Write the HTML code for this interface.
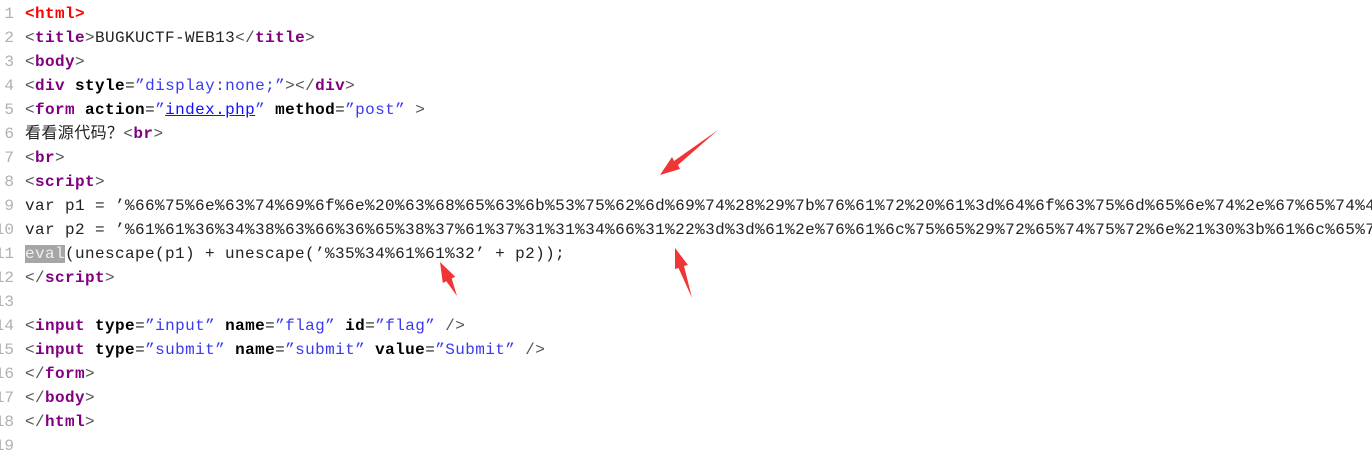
<!DOCTYPE html>
<html><head><meta charset="utf-8"><style>
body{margin:0;width:1372px;height:474px;background:#fff;overflow:hidden;position:relative;font-family:"Liberation Mono","Noto Sans CJK SC",monospace;font-size:16px;letter-spacing:0.4px}
.l{position:absolute;left:0;height:24px;line-height:24px;white-space:pre;width:2000px}
.n{position:absolute;left:-6px;width:20px;text-align:right;color:#b0b0b0;letter-spacing:0}
.c{position:absolute;left:25px;color:#222}
.t{color:#800080;font-weight:bold}
.h{color:#ff0000;font-weight:bold}
.b{color:#555}
.a{color:#000;font-weight:bold}
.v{color:#3a3af0}
.u{color:#1010ff;text-decoration:underline}
.e{background:#a6a6a6;color:#eee}
</style></head><body>
<div class="l" style="top:2px"><span class="n">1</span><span class="c"><span class="h">&lt;html&gt;</span></span></div>
<div class="l" style="top:26px"><span class="n">2</span><span class="c"><span class="b">&lt;</span><span class="t">title</span><span class="b">&gt;</span>BUGKUCTF-WEB13<span class="b">&lt;/</span><span class="t">title</span><span class="b">&gt;</span></span></div>
<div class="l" style="top:50px"><span class="n">3</span><span class="c"><span class="b">&lt;</span><span class="t">body</span><span class="b">&gt;</span></span></div>
<div class="l" style="top:74px"><span class="n">4</span><span class="c"><span class="b">&lt;</span><span class="t">div</span> <span class="a">style</span>=<span class="v">”display:none;”</span><span class="b">&gt;&lt;/</span><span class="t">div</span><span class="b">&gt;</span></span></div>
<div class="l" style="top:98px"><span class="n">5</span><span class="c"><span class="b">&lt;</span><span class="t">form</span> <span class="a">action</span>=<span class="v">”</span><span class="u">index.php</span><span class="v">”</span> <span class="a">method</span>=<span class="v">”post”</span> <span class="b">&gt;</span></span></div>
<div class="l" style="top:122px"><span class="n">6</span><span class="c">看看源代码？<span class="b">&lt;</span><span class="t">br</span><span class="b">&gt;</span></span></div>
<div class="l" style="top:146px"><span class="n">7</span><span class="c"><span class="b">&lt;</span><span class="t">br</span><span class="b">&gt;</span></span></div>
<div class="l" style="top:170px"><span class="n">8</span><span class="c"><span class="b">&lt;</span><span class="t">script</span><span class="b">&gt;</span></span></div>
<div class="l" style="top:194px"><span class="n">9</span><span class="c">var p1 = ’%66%75%6e%63%74%69%6f%6e%20%63%68%65%63%6b%53%75%62%6d%69%74%28%29%7b%76%61%72%20%61%3d%64%6f%63%75%6d%65%6e%74%2e%67%65%74%45%6c</span></div>
<div class="l" style="top:218px"><span class="n">10</span><span class="c">var p2 = ’%61%61%36%34%38%63%66%36%65%38%37%61%37%31%31%34%66%31%22%3d%3d%61%2e%76%61%6c%75%65%29%72%65%74%75%72%6e%21%30%3b%61%6c%65%72%74</span></div>
<div class="l" style="top:242px"><span class="n">11</span><span class="c"><span class="e">eval</span>(unescape(p1) + unescape(’%35%34%61%61%32’ + p2));</span></div>
<div class="l" style="top:266px"><span class="n">12</span><span class="c"><span class="b">&lt;/</span><span class="t">script</span><span class="b">&gt;</span></span></div>
<div class="l" style="top:290px"><span class="n">13</span></div>
<div class="l" style="top:314px"><span class="n">14</span><span class="c"><span class="b">&lt;</span><span class="t">input</span> <span class="a">type</span>=<span class="v">”input”</span> <span class="a">name</span>=<span class="v">”flag”</span> <span class="a">id</span>=<span class="v">”flag”</span> <span class="b">/&gt;</span></span></div>
<div class="l" style="top:338px"><span class="n">15</span><span class="c"><span class="b">&lt;</span><span class="t">input</span> <span class="a">type</span>=<span class="v">”submit”</span> <span class="a">name</span>=<span class="v">”submit”</span> <span class="a">value</span>=<span class="v">”Submit”</span> <span class="b">/&gt;</span></span></div>
<div class="l" style="top:362px"><span class="n">16</span><span class="c"><span class="b">&lt;/</span><span class="t">form</span><span class="b">&gt;</span></span></div>
<div class="l" style="top:386px"><span class="n">17</span><span class="c"><span class="b">&lt;/</span><span class="t">body</span><span class="b">&gt;</span></span></div>
<div class="l" style="top:410px"><span class="n">18</span><span class="c"><span class="b">&lt;/</span><span class="t">html</span><span class="b">&gt;</span></span></div>
<div class="l" style="top:434px"><span class="n">19</span></div>
<svg width="1372" height="474" style="position:absolute;left:0;top:0">
<polygon points="718,130 678,165 680,169 660,175 672,157 674,161" fill="#f03535"/>
<polygon points="692,298 684,266 688,265 675,248 675,269 678.5,268" fill="#f03535"/>
<polygon points="457,296 451.7,278.5 455.2,276.7 440,262 442.8,283 446.3,281.2" fill="#f03535"/>
</svg>
</body></html>
